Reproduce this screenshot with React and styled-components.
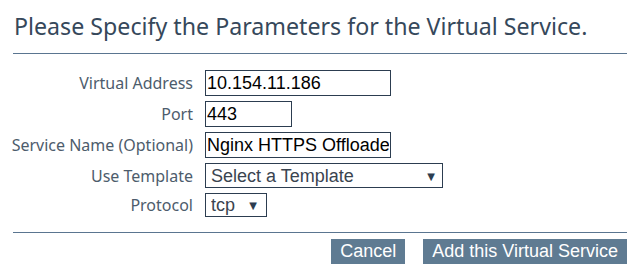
import React from "react";
import styled, { createGlobalStyle } from "styled-components";

const Global = createGlobalStyle`
  html, body {
    margin: 0;
    padding: 0;
    background: #ffffff;
  }
  body {
    font-family: "Noto Sans", "Open Sans", sans-serif;
  }
`;

const Panel = styled.div`
  width: 614px;
  padding: 0 11px 0 13px;
  display: flex;
  flex-direction: column;
`;

const Title = styled.h2`
  margin: 0;
  padding: 10px 0 0 1px;
  height: 53px;
  box-sizing: border-box;
  font-size: 23.2px;
  font-weight: 400;
  color: #36485b;
  white-space: nowrap;
`;

const Rule = styled.hr`
  margin: 0;
  border: none;
  border-top: 1px solid #5a7590;
`;

const Form = styled.div`
  display: grid;
  grid-template-columns: 180px auto;
  column-gap: 12px;
  row-gap: 5px;
  align-items: center;
  justify-items: start;
  padding: 16px 0 15px;
`;

const Label = styled.label`
  justify-self: end;
  font-size: 16px;
  line-height: 20px;
  color: #4d5c6c;
  white-space: nowrap;
`;

const TextInput = styled.input`
  box-sizing: border-box;
  width: ${(p) => p.$w}px;
  height: ${(p) => p.$h}px;
  margin: 0;
  padding: 0 1px;
  border: 1px solid #2c3d50;
  border-radius: 0;
  font-family: "Liberation Sans", Arial, sans-serif;
  font-size: 18px;
  color: #000;
  outline: none;
`;

const SelectWrap = styled.span`
  position: relative;
  display: inline-block;
  width: ${(p) => p.$w}px;
  height: ${(p) => p.$h}px;
`;

const Select = styled.select`
  appearance: none;
  -webkit-appearance: none;
  box-sizing: border-box;
  width: 100%;
  height: 100%;
  margin: 0;
  padding: 0 0 0 5px;
  border: 1px solid #2c3d50;
  border-radius: 0;
  background: #fff;
  font-family: "Liberation Sans", Arial, sans-serif;
  font-size: 18px;
  color: #3a4450;
  outline: none;
`;

const Arrow = styled.span`
  position: absolute;
  right: ${(p) => p.$r}px;
  top: 50%;
  transform: translateY(-50%);
  pointer-events: none;
  font-family: "DejaVu Sans", sans-serif;
  font-size: 10px;
  color: #2c3d50;
`;

const Actions = styled.div`
  display: flex;
  justify-content: flex-end;
  gap: 18px;
  padding-top: 6px;
`;

const Button = styled.button`
  height: 25px;
  padding: 0 9px;
  border: none;
  border-radius: 0;
  background: #5f7b92;
  color: #fff;
  font-family: "Liberation Sans", Arial, sans-serif;
  font-size: 18px;
  line-height: 25px;
  cursor: pointer;
`;

function Dropdown({ w, h, r, children }) {
  return (
    <SelectWrap $w={w} $h={h}>
      <Select>{children}</Select>
      <Arrow $r={r}>▼</Arrow>
    </SelectWrap>
  );
}

export default function App() {
  return (
    <>
      <Global />
      <Panel>
        <Title>Please Specify the Parameters for the Virtual Service.</Title>
        <Rule />
        <Form>
          <Label>Virtual Address</Label>
          <TextInput $w={186} $h={26} defaultValue="10.154.11.186" />
          <Label>Port</Label>
          <TextInput $w={87} $h={26} defaultValue="443" />
          <Label>Service Name (Optional)</Label>
          <TextInput $w={186} $h={26} defaultValue="Nginx HTTPS Offloader" />
          <Label>Use Template</Label>
          <Dropdown w={238} h={25} r={8}>
            <option>Select a Template</option>
          </Dropdown>
          <Label>Protocol</Label>
          <Dropdown w={62} h={24} r={10}>
            <option>tcp</option>
            <option>udp</option>
          </Dropdown>
        </Form>
        <Rule />
        <Actions>
          <Button>Cancel</Button>
          <Button>Add this Virtual Service</Button>
        </Actions>
      </Panel>
    </>
  );
}
